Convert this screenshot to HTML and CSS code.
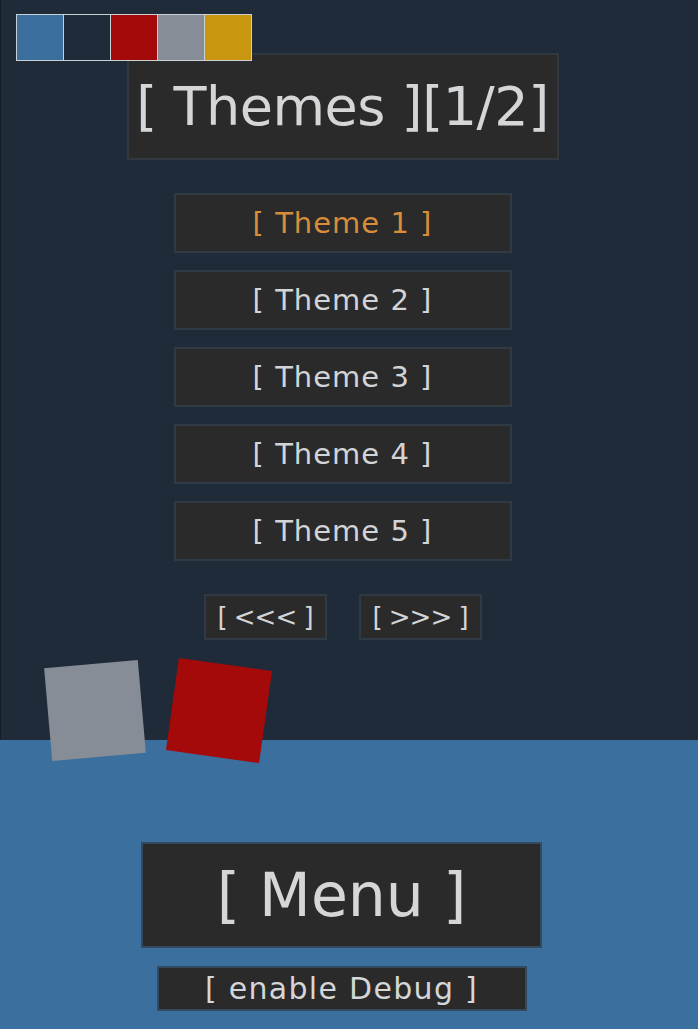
FILE: index.html
```html
<!DOCTYPE html>
<html>
<head>
<meta charset="utf-8">
<link rel="stylesheet" href="styles.css">
</head>
<body>
<div class="page">
  <div class="palette">
    <span class="sw sw-blue"></span>
    <span class="sw sw-navy"></span>
    <span class="sw sw-red"></span>
    <span class="sw sw-gray"></span>
    <span class="sw sw-gold"></span>
  </div>
  <section class="top">
    <div class="col">
      <div class="title">[ Themes ][1/2]</div>
      <div class="themes">
        <div class="theme active">[ Theme 1 ]</div>
        <div class="theme">[ Theme 2 ]</div>
        <div class="theme">[ Theme 3 ]</div>
        <div class="theme">[ Theme 4 ]</div>
        <div class="theme">[ Theme 5 ]</div>
      </div>
      <div class="nav">
        <div class="navbtn">[ &lt;&lt;&lt; ]</div>
        <div class="navbtn">[ &gt;&gt;&gt; ]</div>
      </div>
    </div>
    <div class="sq sq-gray"></div>
    <div class="sq sq-red"></div>
  </section>
  <section class="bottom">
    <div class="col">
      <div class="menu">[ Menu ]</div>
      <div class="debug">[ enable Debug ]</div>
    </div>
  </section>
</div>
</body>
</html>
```
FILE: styles.css
```css
html, body {
  margin: 0;
  padding: 0;
}
body {
  font-family: "DejaVu Sans", "Open Sans", sans-serif;
  color: #d2d4d6;
  background: #3a6f9e;
}
.page {
  position: relative;
  width: 698px;
  height: 1029px;
  display: flex;
  flex-direction: column;
  overflow: hidden;
}
.palette {
  position: absolute;
  left: 16px;
  top: 14px;
  display: flex;
  z-index: 5;
}
.sw {
  width: 46px;
  height: 45px;
  border: 1px solid #c9d0d6;
  margin-right: -1px;
}
.sw-blue { background: #3a6f9e; }
.sw-navy { background: #1f2b38; }
.sw-red { background: #a50a0a; }
.sw-gray { background: #868d96; }
.sw-gold { background: #c9960f; }

.top {
  position: relative;
  height: 740px;
  background: #1f2b38;
  border-left: 1px solid #151d26;
  box-sizing: border-box;
}
.col {
  width: 683px;
  display: flex;
  flex-direction: column;
  align-items: center;
}
.top .col {
  padding-top: 53px;
}
.title {
  width: 432px;
  height: 107px;
  box-sizing: border-box;
  background: #2a2a2b;
  border: 2px solid #323840;
  display: flex;
  align-items: center;
  justify-content: center;
  font-size: 54px;
  letter-spacing: -0.5px;
  color: #d4d6d8;
  white-space: nowrap;
}
.themes {
  margin-top: 33px;
  display: flex;
  flex-direction: column;
  gap: 17px;
}
.theme {
  width: 338px;
  height: 60px;
  box-sizing: border-box;
  background: #2a2a2b;
  border: 2px solid #303a44;
  display: flex;
  align-items: center;
  justify-content: center;
  font-size: 29px;
  letter-spacing: 1px;
  color: #d2d4d6;
}
.theme.active {
  color: #d98c3a;
}
.nav {
  margin-top: 33px;
  display: flex;
  gap: 32px;
}
.navbtn {
  width: 123px;
  height: 46px;
  box-sizing: border-box;
  background: #2a2a2b;
  border: 2px solid #303a44;
  display: flex;
  align-items: center;
  justify-content: center;
  font-size: 26px;
  letter-spacing: -1px;
  color: #d2d4d6;
}
.sq {
  position: absolute;
  width: 94px;
  height: 93px;
}
.sq-gray {
  left: 47px;
  top: 664px;
  background: #868d96;
  transform: rotate(-5deg);
}
.sq-red {
  left: 171px;
  top: 664px;
  background: #a50a0a;
  transform: rotate(8deg);
  z-index: 2;
}
.bottom {
  flex: 1;
  background: #3a6f9e;
}
.bottom .col {
  padding-top: 102px;
}
.menu {
  width: 401px;
  height: 106px;
  box-sizing: border-box;
  background: #2a2a2b;
  border: 2px solid #34495c;
  display: flex;
  align-items: center;
  justify-content: center;
  font-size: 60px;
  color: #d4d6d8;
}
.debug {
  margin-top: 18px;
  width: 370px;
  height: 45px;
  box-sizing: border-box;
  background: #2a2a2b;
  border: 2px solid #34495c;
  display: flex;
  align-items: center;
  justify-content: center;
  font-size: 30px;
  letter-spacing: 1.3px;
  color: #d4d6d8;
}
```
